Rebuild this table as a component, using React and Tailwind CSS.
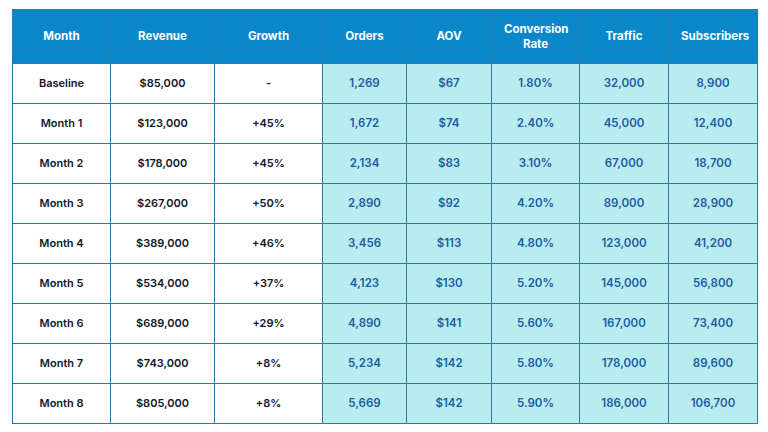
const columns = [
	{ label: "Month", width: "w-[98px]" },
	{ label: "Revenue", width: "w-[104px]" },
	{ label: "Growth", width: "w-[108px]" },
	{ label: "Orders", width: "w-[84px]" },
	{ label: "AOV", width: "w-[85px]" },
	{ label: "Conversion Rate", width: "w-[88px]" },
	{ label: "Traffic", width: "w-[89px]" },
	{ label: "Subscribers", width: "w-[89px]" },
];

const rows = [
	["Baseline", "$85,000", "-", "1,269", "$67", "1.80%", "32,000", "8,900"],
	["Month 1", "$123,000", "+45%", "1,672", "$74", "2.40%", "45,000", "12,400"],
	["Month 2", "$178,000", "+45%", "2,134", "$83", "3.10%", "67,000", "18,700"],
	["Month 3", "$267,000", "+50%", "2,890", "$92", "4.20%", "89,000", "28,900"],
	["Month 4", "$389,000", "+46%", "3,456", "$113", "4.80%", "123,000", "41,200"],
	["Month 5", "$534,000", "+37%", "4,123", "$130", "5.20%", "145,000", "56,800"],
	["Month 6", "$689,000", "+29%", "4,890", "$141", "5.60%", "167,000", "73,400"],
	["Month 7", "$743,000", "+8%", "5,234", "$142", "5.80%", "178,000", "89,600"],
	["Month 8", "$805,000", "+8%", "5,669", "$142", "5.90%", "186,000", "106,700"],
];

export default function App() {
	return (
		<div className="w-[768px] h-[432px] bg-white pt-[9px] pl-[12px] font-['Inter',sans-serif]">
			<table className="table-fixed border-collapse w-[745px] border border-[#2f78a6]">
				<colgroup>
					{columns.map((col) => (
						<col key={col.label} className={col.width} />
					))}
				</colgroup>
				<thead>
					<tr className="h-[54px] bg-[#0a87c9] text-white">
						{columns.map((col) => (
							<th
								key={col.label}
								className="border border-[#2f78a6] px-3 text-[11.5px] font-bold leading-[15px] text-center"
							>
								{col.label}
							</th>
						))}
					</tr>
				</thead>
				<tbody>
					{rows.map((row) => (
						<tr key={row[0]} className="h-[40px]">
							{row.map((cell, index) => (
								<td
									key={index}
									className={
										index < 3
											? "border border-[#2f78a6] bg-white text-center text-[11px] font-semibold text-[#111827]"
											: "border border-[#2f78a6] bg-[#b9ecee] text-center text-[11.5px] font-semibold text-[#1b5ca6]"
									}
								>
									{cell}
								</td>
							))}
						</tr>
					))}
				</tbody>
			</table>
		</div>
	);
}
